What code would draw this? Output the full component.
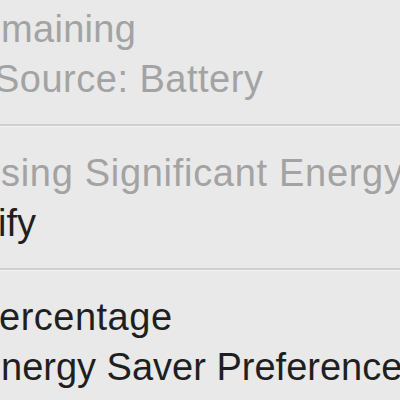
export default function App() {
  return (
    <div
      className="h-[400px] w-[400px] overflow-hidden bg-[#e9e9e9] pt-[4px] text-[38px] leading-[50px] whitespace-nowrap"
      style={{ fontFamily: '"Liberation Sans", Arial, sans-serif' }}
    >
      <div className="pl-[1px] tracking-[0.3px] text-[#a3a3a3]">maining</div>
      <div className="-ml-[6px] tracking-[0.5px] text-[#a3a3a3]">Source: Battery</div>

      <div className="h-[44px] pt-[20px]">
        <div className="h-[2px] bg-[#cfcfcf]" />
        <div className="h-[1px] bg-[#f4f4f4]" />
      </div>

      <div className="pl-[1px] tracking-[0.7px] text-[#a3a3a3]">sing Significant Energy</div>
      <div className="-ml-[2px] text-[#1f1f1f]">ify</div>

      <div className="h-[44px] pt-[20px]">
        <div className="h-[2px] bg-[#cfcfcf]" />
        <div className="h-[1px] bg-[#f4f4f4]" />
      </div>

      <div className="-ml-[1px] tracking-[0.5px] text-[#1f1f1f]">ercentage</div>
      <div className="pl-[1px] text-[#1f1f1f]">nergy Saver Preferences</div>
    </div>
  );
}
